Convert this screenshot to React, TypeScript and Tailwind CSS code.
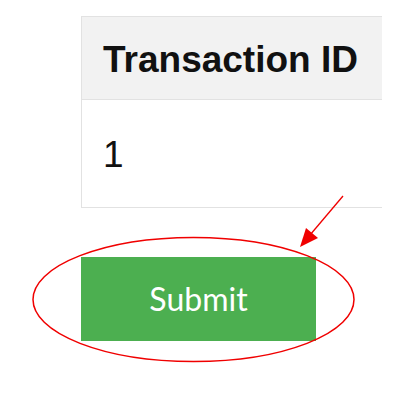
import React from "react";

export default function App() {
  return (
    <div className="relative w-[400px] h-[400px] bg-white overflow-hidden">
      <div className="pl-[81px] pt-[16px]">
        <div className="w-[301px] border-l border-t border-b border-[#e2e2e2]" style={{ fontFamily: '"Liberation Sans", Arial, sans-serif' }}>
          <div className="h-[83px] bg-[#f2f2f2] border-b border-[#e2e2e2] pl-[21px] pt-[24px]">
            <div className="text-[37px] leading-none font-bold text-[#111]">Transaction ID</div>
          </div>
          <div className="h-[107px] pl-[21px] pt-[36px]">
            <div className="text-[37px] leading-none text-[#111]">1</div>
          </div>
        </div>
        <button
          className="mt-[49px] w-[235px] h-[84px] bg-[#4caf50] text-white text-[32px] flex items-center justify-center"
          style={{ fontFamily: 'Lato, "Open Sans", sans-serif' }}
        >
          Submit
        </button>
      </div>
      <svg className="absolute left-0 top-0 pointer-events-none" width="400" height="400" viewBox="0 0 400 400">
        <ellipse cx="193.5" cy="299.5" rx="160.5" ry="62" fill="none" stroke="#f00000" strokeWidth="1.5" />
        <line x1="343" y1="196" x2="310" y2="235" stroke="#f00000" strokeWidth="1.3" />
        <polygon points="300,247 306,228 318,238" fill="#f00000" />
      </svg>
    </div>
  );
}
